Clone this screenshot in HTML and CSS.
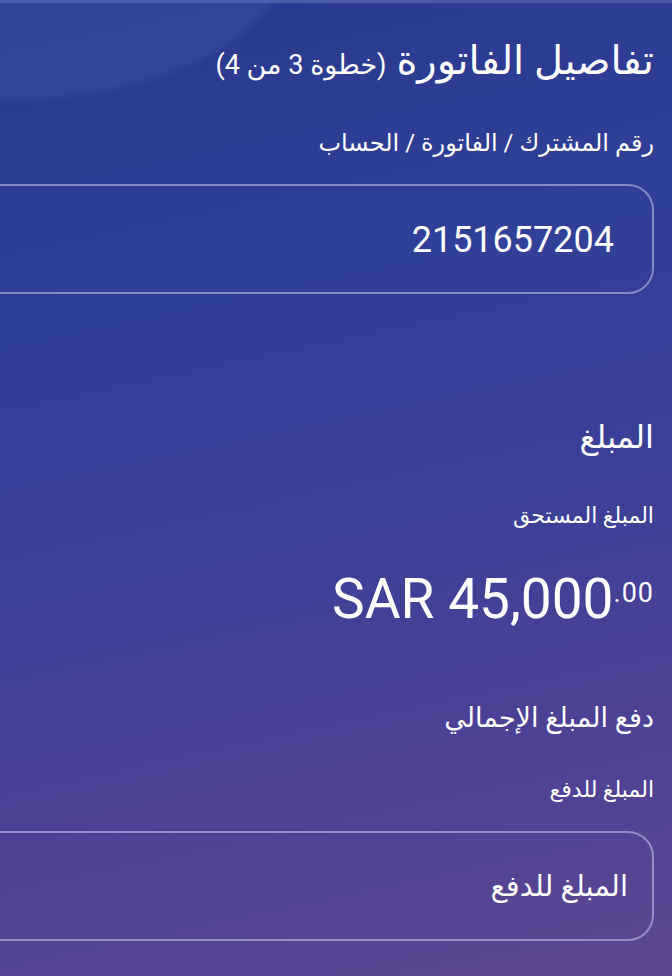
FILE: index.html
```html
<!DOCTYPE html>
<html lang="ar" dir="rtl">
<head>
    <meta charset="UTF-8">
    <meta name="viewport" content="width=device-width, initial-scale=1.0">
    <title>تفاصيل الفاتورة</title>
    <link rel="stylesheet" href="styles.css">
</head>
<body>
    <div class="screen">
        <div class="glow"></div>
        <div class="top-edge"></div>

        <section class="invoice">
            <h1 class="title">تفاصيل الفاتورة <span class="step">(خطوة 3 من 4)</span></h1>
            <div class="field-label">رقم المشترك / الفاتورة / الحساب</div>
            <div class="input-box">
                <span class="input-value">2151657204</span>
            </div>
        </section>

        <section class="amount-section">
            <h2 class="heading">المبلغ</h2>
            <div class="sub-label">المبلغ المستحق</div>
            <div class="amount" dir="ltr">SAR 45,000<span class="cents">.00</span></div>

            <h3 class="pay-title">دفع المبلغ الإجمالي</h3>
            <div class="sub-label pay-label">المبلغ للدفع</div>
            <div class="input-box pay-box">
                <span class="input-placeholder">المبلغ للدفع</span>
            </div>
        </section>
    </div>
</body>
</html>
```

FILE: styles.css
```css
html, body {
    margin: 0;
    padding: 0;
}
body {
    font-family: Roboto, "Noto Sans", "DejaVu Sans", sans-serif;
    color: #fff;
    background: #3a3f95;
}
.screen {
    position: relative;
    overflow: hidden;
    width: 672px;
    height: 976px;
    box-sizing: border-box;
    padding: 0 18px 0 0;
    background: linear-gradient(168deg, #283a8d 0%, #303f97 30%, #3c4098 55%, #4c4195 75%, #5d4792 100%);
}
.glow {
    position: absolute;
    top: -200px;
    left: -270px;
    width: 560px;
    height: 300px;
    border-radius: 50%;
    background: rgba(130, 150, 230, 0.11);
    filter: blur(3px);
}
.top-edge {
    height: 3px;
    background: #4a58a6;
    margin-right: -18px;
}
.invoice, .amount-section {
    position: relative;
}
.title {
    margin: 0;
    padding-top: 30px;
    font-size: 40px;
    font-weight: 400;
    line-height: 56px;
}
.step {
    font-size: 27px;
}
.field-label {
    margin-top: 32px;
    font-size: 24px;
    line-height: 36px;
}
.input-box {
    margin-top: 23px;
    margin-left: -30px;
    height: 106px;
    border: 2px solid rgba(200, 200, 240, 0.55);
    border-radius: 26px;
    display: flex;
    align-items: center;
    padding-right: 38px;
}
.input-value {
    font-size: 36px;
    padding-top: 2px;
}
.amount-section {
    padding-top: 120px;
}
.heading {
    margin: 0;
    font-size: 32px;
    font-weight: 400;
    line-height: 46px;
}
.sub-label {
    margin-top: 41px;
    font-size: 22px;
    line-height: 30px;
}
.amount {
    margin-top: 36px;
    text-align: right;
    font-size: 55px;
    line-height: 64px;
}
.cents {
    font-size: 27px;
    line-height: 0;
    letter-spacing: 1px;
    vertical-align: 16px;
}
.pay-title {
    margin: 67px 0 0;
    font-size: 27px;
    font-weight: 400;
    line-height: 40px;
}
.pay-label {
    margin-top: 37px;
}
.pay-box {
    margin-top: 26px;
}
.input-placeholder {
    font-size: 29px;
    margin-right: -14px;
}
```
